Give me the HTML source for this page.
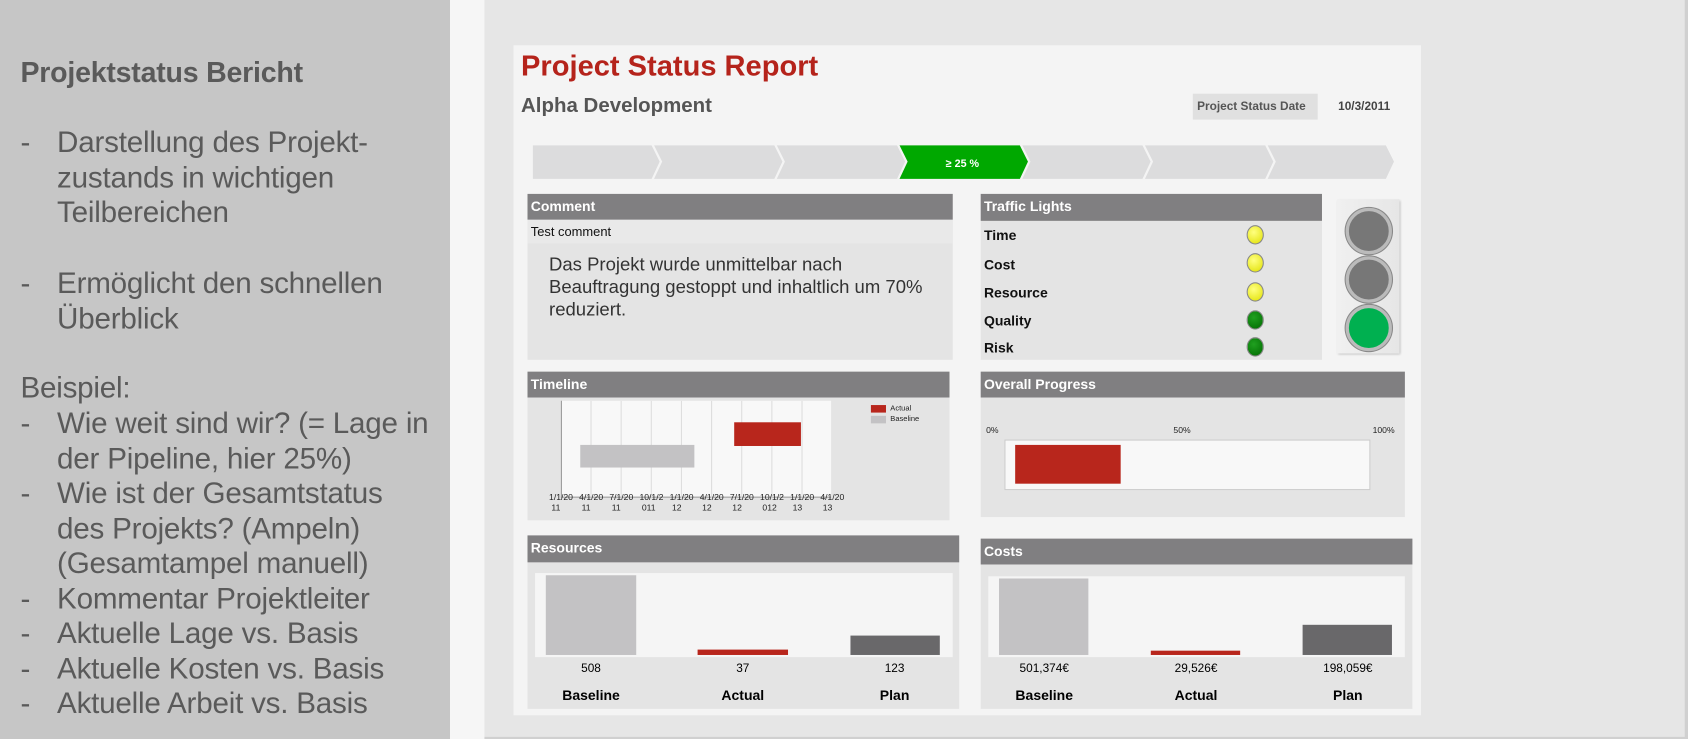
<!DOCTYPE html>
<html><head><meta charset="utf-8"><style>
*{margin:0;padding:0;box-sizing:border-box}
html,body{width:1688px;height:739px;overflow:hidden;background:#e6e6e6;font-family:"Liberation Sans",sans-serif}
#w{position:absolute;left:0;top:0;width:1568px;height:686px;transform:scale(1.07653,1.07726);transform-origin:0 0;background:#e6e6e6}
.a{position:absolute}
.lt{color:#5a5a5a;font-size:27.5px;line-height:32.5px;letter-spacing:-0.2px}
.hd{position:absolute;background:#807f81;color:#fff;font-weight:bold;font-size:13px;padding:4px 3px;height:24px}
.bd{position:absolute;background:#e4e4e4}
.tl{position:absolute;font-size:13px;font-weight:bold;color:#111}
.dot{position:absolute;width:16px;height:18px;border-radius:50%;border:1px solid #888}
.sm{font-size:8px;color:#222;position:absolute;text-align:center;line-height:10px}
</style></head><body><div id="w">
<div class="a" style="left:0;top:0;width:418px;height:686px;background:#c6c6c6"></div>
<div class="a" style="left:418px;top:0;width:32px;height:686px;background:#f6f6f6"></div>
<div class="a" style="left:1565px;top:0;width:3px;height:686px;background:#d0d0d0"></div>
<div class="a" style="left:450px;top:684px;width:1118px;height:2px;background:#d0d0d0"></div>
<div class="a lt" style="left:19px;top:51px;font-weight:bold;font-size:26.5px">Projektstatus Bericht</div>
<div class="a lt" style="left:19px;top:116px">-</div>
<div class="a lt" style="left:53px;top:116px;white-space:nowrap">Darstellung des Projekt-<br>zustands in wichtigen<br>Teilbereichen</div>
<div class="a lt" style="left:19px;top:247px">-</div>
<div class="a lt" style="left:53px;top:247px;white-space:nowrap">Ermöglicht den schnellen<br>Überblick</div>
<div class="a lt" style="left:19px;top:344px">Beispiel:</div>
<div class="a lt" style="left:19px;top:377px">-<br><br>-<br><br><br>-<br>-<br>-<br>-</div>
<div class="a lt" style="left:53px;top:377px;white-space:nowrap">Wie weit sind wir? (= Lage in<br>der Pipeline, hier 25%)<br>Wie ist der Gesamtstatus<br>des Projekts? (Ampeln)<br>(Gesamtampel manuell)<br>Kommentar Projektleiter<br>Aktuelle Lage vs. Basis<br>Aktuelle Kosten vs. Basis<br>Aktuelle Arbeit vs. Basis</div>

<div class="a" style="left:477px;top:42px;width:843px;height:622px;background:#f4f4f4"></div>
<div class="a" style="left:484px;top:46px;color:#b5231b;font-weight:bold;font-size:27px">Project Status Report</div>
<div class="a" style="left:484px;top:88px;color:#555;font-weight:bold;font-size:19px">Alpha Development</div>
<div class="a" style="left:1108px;top:87px;width:116px;height:24px;background:#e0e0e0;font-size:11px;font-weight:bold;color:#555;padding:6px 4px">Project Status Date</div>
<div class="a" style="left:1243px;top:93px;font-size:11px;font-weight:bold;color:#444">10/3/2011</div>
<svg class="a" style="left:490px;top:133px" width="810" height="36">
<g fill="#dcdcdd" stroke="#f4f4f4" stroke-width="2">
<polygon points="4,1 116,1 124,17 116,34 4,34"/>
<polygon points="116,1 230,1 238,17 230,34 116,34 124,17"/>
<polygon points="230,1 344,1 352,17 344,34 230,34 238,17"/>
<polygon points="458,1 572,1 580,17 572,34 458,34 466,17"/>
<polygon points="572,1 686,1 694,17 686,34 572,34 580,17"/>
<polygon points="686,1 798,1 806,17 798,34 686,34 694,17"/>
</g>
<polygon points="344,1 458,1 466,17 458,34 344,34 352,17" fill="#00a800" stroke="#f4f4f4" stroke-width="2"/>
<text x="404" y="22" fill="#fff" font-size="10" font-weight="bold" text-anchor="middle" font-family="Liberation Sans">≥ 25 %</text>
</svg>

<div class="bd" style="left:490px;top:180px;width:395px;height:154px"></div>
<div class="hd" style="left:490px;top:180px;width:395px">Comment</div>
<div class="a" style="left:490px;top:204px;width:395px;height:22px;background:#e9e9e9;font-size:12px;padding:4px 3px;color:#111">Test comment</div>
<div class="a" style="left:510px;top:235px;font-size:17.2px;color:#333;line-height:21px;white-space:nowrap">Das Projekt wurde unmittelbar nach<br>Beauftragung gestoppt und inhaltlich um 70%<br>reduziert.</div>

<div class="bd" style="left:911px;top:180px;width:317px;height:154px"></div>
<div class="hd" style="left:911px;top:180px;width:317px;height:25px">Traffic Lights</div>
<div class="tl" style="left:914px;top:211px">Time</div>
<div class="tl" style="left:914px;top:238px">Cost</div>
<div class="tl" style="left:914px;top:264px">Resource</div>
<div class="tl" style="left:914px;top:290px">Quality</div>
<div class="tl" style="left:914px;top:315px">Risk</div>
<div class="dot" style="left:1158px;top:209px;background:radial-gradient(circle at 40% 35%,#ffff80,#e0e000)"></div>
<div class="dot" style="left:1158px;top:235px;background:radial-gradient(circle at 40% 35%,#ffff80,#e0e000)"></div>
<div class="dot" style="left:1158px;top:262px;background:radial-gradient(circle at 40% 35%,#ffff80,#e0e000)"></div>
<div class="dot" style="left:1158px;top:288px;background:radial-gradient(circle at 40% 35%,#20a020,#006a00)"></div>
<div class="dot" style="left:1158px;top:313px;background:radial-gradient(circle at 40% 35%,#20a020,#006a00)"></div>
<div class="a" style="left:1242px;top:185px;width:58px;height:143px;background:linear-gradient(90deg,#f0f0f0,#e6e6e6);box-shadow:1px 1px 2px #bbb"></div>
<div class="a" style="left:1250px;top:193px;width:43px;height:43px;border-radius:50%;background:#777;border:3px solid #bbb;box-shadow:0 0 0 1px #888"></div>
<div class="a" style="left:1250px;top:238px;width:43px;height:43px;border-radius:50%;background:#777;border:3px solid #bbb;box-shadow:0 0 0 1px #888"></div>
<div class="a" style="left:1250px;top:283px;width:43px;height:43px;border-radius:50%;background:#00b050;border:3px solid #bbb;box-shadow:0 0 0 1px #888"></div>

<div class="bd" style="left:490px;top:345px;width:392px;height:138px"></div>
<div class="hd" style="left:490px;top:345px;width:392px">Timeline</div>
<div class="a" style="left:521px;top:372px;width:251px;height:90px;background:#f8f8f8;border-left:1px solid #999;border-bottom:1px solid #999"></div>
<svg class="a" style="left:521px;top:372px" width="252" height="92"><g stroke="#ddd"><line x1="28" y1="0" x2="28" y2="90"/><line x1="56" y1="0" x2="56" y2="90"/><line x1="84" y1="0" x2="84" y2="90"/><line x1="112" y1="0" x2="112" y2="90"/><line x1="140" y1="0" x2="140" y2="90"/><line x1="168" y1="0" x2="168" y2="90"/><line x1="196" y1="0" x2="196" y2="90"/><line x1="224" y1="0" x2="224" y2="90"/></g>
<rect x="18" y="41" width="106" height="21" fill="#c3c2c4"/><rect x="161" y="20" width="62" height="22" fill="#b8261c"/></svg>
<div class="sm" style="left:506px;top:457px;width:300px;text-align:left;word-spacing:0">
<span style="position:absolute;left:4px">1/1/20<br>&nbsp;11</span><span style="position:absolute;left:32px">4/1/20<br>&nbsp;11</span><span style="position:absolute;left:60px">7/1/20<br>&nbsp;11</span><span style="position:absolute;left:88px">10/1/2<br>&nbsp;011</span><span style="position:absolute;left:116px">1/1/20<br>&nbsp;12</span><span style="position:absolute;left:144px">4/1/20<br>&nbsp;12</span><span style="position:absolute;left:172px">7/1/20<br>&nbsp;12</span><span style="position:absolute;left:200px">10/1/2<br>&nbsp;012</span><span style="position:absolute;left:228px">1/1/20<br>&nbsp;13</span><span style="position:absolute;left:256px">4/1/20<br>&nbsp;13</span></div>
<div class="a" style="left:809px;top:376px;width:14px;height:7px;background:#b8261c"></div>
<div class="a" style="left:809px;top:386px;width:14px;height:7px;background:#c3c2c4"></div>
<div class="sm" style="left:827px;top:375px;text-align:left;font-size:7px">Actual<br>Baseline</div>

<div class="bd" style="left:911px;top:345px;width:394px;height:135px"></div>
<div class="hd" style="left:911px;top:345px;width:394px">Overall Progress</div>
<div class="sm" style="left:916px;top:395px">0%</div>
<div class="sm" style="left:1090px;top:395px">50%</div>
<div class="sm" style="left:1275px;top:395px">100%</div>
<div class="a" style="left:933px;top:408px;width:340px;height:47px;background:#f8f8f8;border:1px solid #ccc"></div>
<div class="a" style="left:943px;top:413px;width:98px;height:36px;background:#b8261c"></div>

<div class="bd" style="left:490px;top:497px;width:401px;height:161px"></div>
<div class="hd" style="left:490px;top:497px;width:401px;height:25px">Resources</div>
<div class="a" style="left:497px;top:532px;width:388px;height:78px;background:#f5f5f5"></div>
<div class="a" style="left:507px;top:534px;width:84px;height:74px;background:#c3c2c4"></div>
<div class="a" style="left:648px;top:603px;width:84px;height:5px;background:#b8261c"></div>
<div class="a" style="left:790px;top:590px;width:83px;height:18px;background:#69686a"></div>
<div class="a" style="left:509px;top:615px;width:80px;text-align:center;font-size:11px">508</div>
<div class="a" style="left:650px;top:615px;width:80px;text-align:center;font-size:11px">37</div>
<div class="a" style="left:791px;top:615px;width:80px;text-align:center;font-size:11px">123</div>
<div class="a" style="left:509px;top:638px;width:80px;text-align:center;font-size:13px;font-weight:bold">Baseline</div>
<div class="a" style="left:650px;top:638px;width:80px;text-align:center;font-size:13px;font-weight:bold">Actual</div>
<div class="a" style="left:791px;top:638px;width:80px;text-align:center;font-size:13px;font-weight:bold">Plan</div>

<div class="bd" style="left:911px;top:500px;width:401px;height:158px"></div>
<div class="hd" style="left:911px;top:500px;width:401px">Costs</div>
<div class="a" style="left:918px;top:535px;width:387px;height:75px;background:#f5f5f5"></div>
<div class="a" style="left:928px;top:537px;width:83px;height:71px;background:#c3c2c4"></div>
<div class="a" style="left:1069px;top:604px;width:83px;height:4px;background:#b8261c"></div>
<div class="a" style="left:1210px;top:580px;width:83px;height:28px;background:#69686a"></div>
<div class="a" style="left:925px;top:615px;width:90px;text-align:center;font-size:11px">501,374€</div>
<div class="a" style="left:1066px;top:615px;width:90px;text-align:center;font-size:11px">29,526€</div>
<div class="a" style="left:1207px;top:615px;width:90px;text-align:center;font-size:11px">198,059€</div>
<div class="a" style="left:930px;top:638px;width:80px;text-align:center;font-size:13px;font-weight:bold">Baseline</div>
<div class="a" style="left:1071px;top:638px;width:80px;text-align:center;font-size:13px;font-weight:bold">Actual</div>
<div class="a" style="left:1212px;top:638px;width:80px;text-align:center;font-size:13px;font-weight:bold">Plan</div>
</div></body></html>
